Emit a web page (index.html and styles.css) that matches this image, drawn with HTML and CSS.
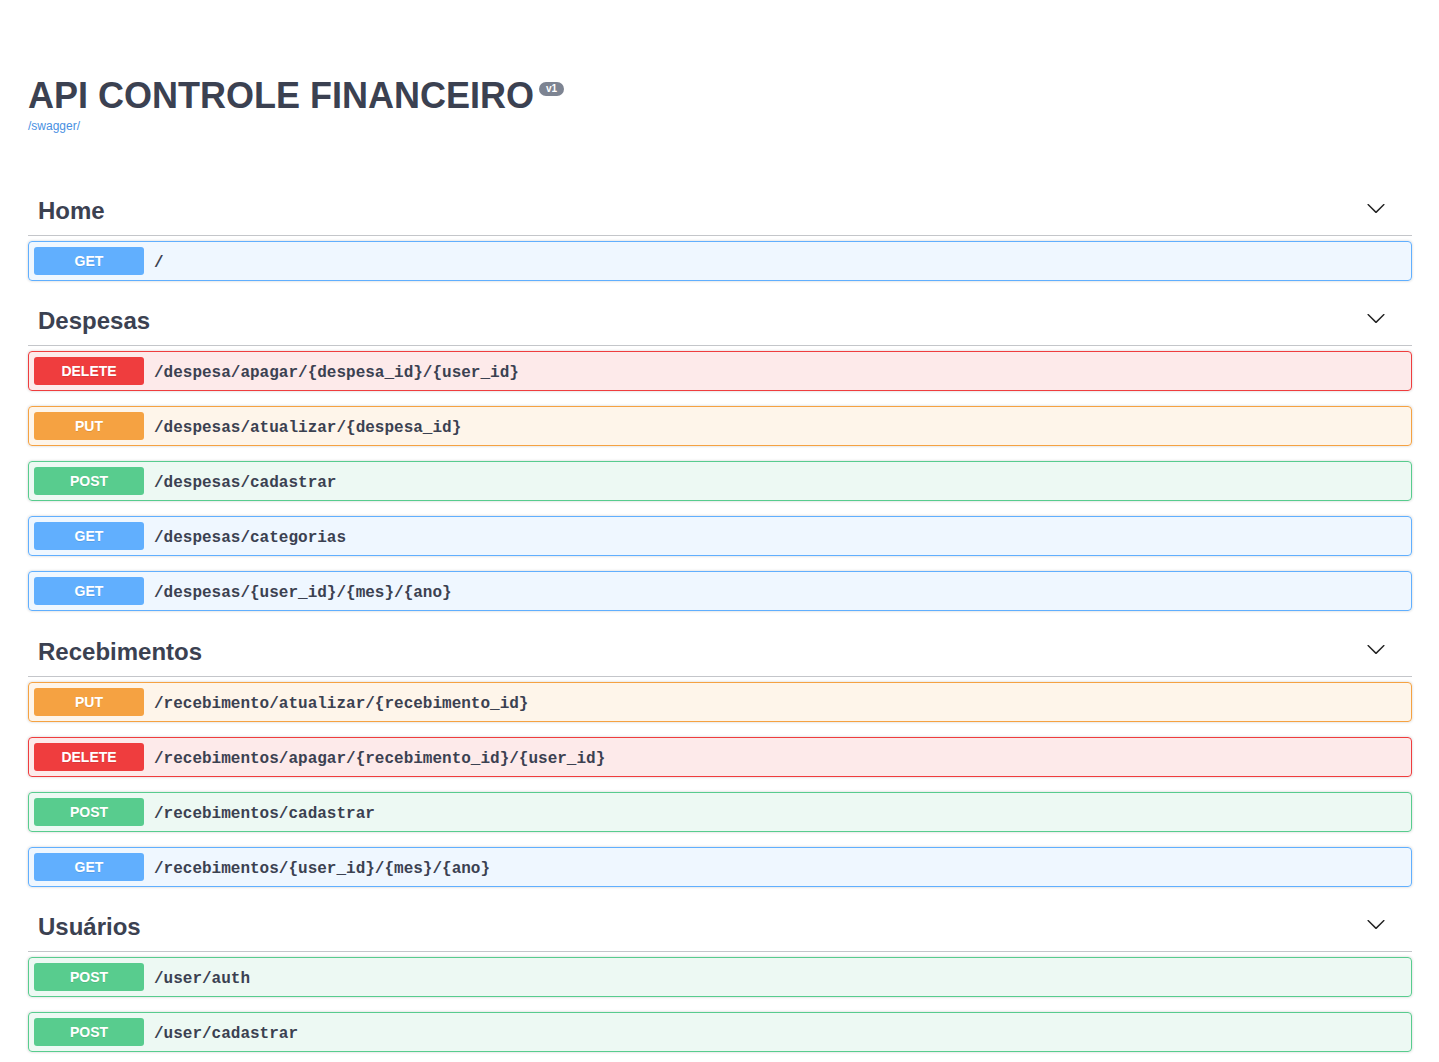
FILE: index.html
```html
<!DOCTYPE html>
<html lang="pt">
<head>
<meta charset="utf-8">
<title>API CONTROLE FINANCEIRO</title>
<link rel="stylesheet" href="styles.css">
</head>
<body>
<div class="wrapper">
  <div class="info">
    <h2 class="title">API CONTROLE FINANCEIRO<span class="version">v1</span></h2>
    <a class="url" href="#">/swagger/</a>
  </div>

  <section class="tag-section">
    <h3 class="tag"><span class="tag-name">Home</span><svg class="chev" viewBox="0 0 20 20" width="20" height="20"><path d="M17.418 6.109c.272-.268.709-.268.979 0s.271.701 0 .969l-7.908 7.83c-.27.268-.707.268-.979 0l-7.908-7.83c-.27-.268-.27-.701 0-.969.271-.268.709-.268.979 0L10 13.25l7.418-7.141z"/></svg></h3>
    <div class="op get"><span class="method">GET</span><span class="path">/</span></div>
  </section>

  <section class="tag-section">
    <h3 class="tag"><span class="tag-name">Despesas</span><svg class="chev" viewBox="0 0 20 20" width="20" height="20"><path d="M17.418 6.109c.272-.268.709-.268.979 0s.271.701 0 .969l-7.908 7.83c-.27.268-.707.268-.979 0l-7.908-7.83c-.27-.268-.27-.701 0-.969.271-.268.709-.268.979 0L10 13.25l7.418-7.141z"/></svg></h3>
    <div class="op delete"><span class="method">DELETE</span><span class="path">/despesa/apagar/{despesa_id}/{user_id}</span></div>
    <div class="op put"><span class="method">PUT</span><span class="path">/despesas/atualizar/{despesa_id}</span></div>
    <div class="op post"><span class="method">POST</span><span class="path">/despesas/cadastrar</span></div>
    <div class="op get"><span class="method">GET</span><span class="path">/despesas/categorias</span></div>
    <div class="op get"><span class="method">GET</span><span class="path">/despesas/{user_id}/{mes}/{ano}</span></div>
  </section>

  <section class="tag-section tag-section-shift">
    <h3 class="tag"><span class="tag-name">Recebimentos</span><svg class="chev" viewBox="0 0 20 20" width="20" height="20"><path d="M17.418 6.109c.272-.268.709-.268.979 0s.271.701 0 .969l-7.908 7.83c-.27.268-.707.268-.979 0l-7.908-7.83c-.27-.268-.27-.701 0-.969.271-.268.709-.268.979 0L10 13.25l7.418-7.141z"/></svg></h3>
    <div class="op put"><span class="method">PUT</span><span class="path">/recebimento/atualizar/{recebimento_id}</span></div>
    <div class="op delete"><span class="method">DELETE</span><span class="path">/recebimentos/apagar/{recebimento_id}/{user_id}</span></div>
    <div class="op post"><span class="method">POST</span><span class="path">/recebimentos/cadastrar</span></div>
    <div class="op get"><span class="method">GET</span><span class="path">/recebimentos/{user_id}/{mes}/{ano}</span></div>
  </section>

  <section class="tag-section">
    <h3 class="tag"><span class="tag-name">Usuários</span><svg class="chev" viewBox="0 0 20 20" width="20" height="20"><path d="M17.418 6.109c.272-.268.709-.268.979 0s.271.701 0 .969l-7.908 7.83c-.27.268-.707.268-.979 0l-7.908-7.83c-.27-.268-.27-.701 0-.969.271-.268.709-.268.979 0L10 13.25l7.418-7.141z"/></svg></h3>
    <div class="op post"><span class="method">POST</span><span class="path">/user/auth</span></div>
    <div class="op post"><span class="method">POST</span><span class="path">/user/cadastrar</span></div>
  </section>
</div>
</body>
</html>
```

FILE: styles.css
```css
* { box-sizing: border-box; }
html, body { margin: 0; padding: 0; background: #fff; }
body {
  font-family: "Liberation Sans", Arial, sans-serif;
  color: #3b4151;
}
.wrapper {
  padding: 0 27px 40px 28px;
}
.info {
  padding-top: 75px;
  margin-bottom: 53px;
}
.title {
  margin: 0;
  font-size: 36px;
  line-height: 42px;
  font-weight: 700;
  color: #3b4151;
}
.version {
  display: inline-block;
  vertical-align: super;
  position: relative;
  top: -3px;
  margin-left: 5px;
  padding: 2px 7px;
  border-radius: 57px;
  background: #7d8492;
  color: #fff;
  font-size: 10px;
  line-height: 10px;
  font-weight: 700;
}
.url {
  display: block;
  margin-top: 2px;
  font-size: 12px;
  line-height: 14px;
  color: #4990e2;
  text-decoration: none;
}
.tag-section {
  display: flex;
  flex-direction: column;
}
.tag-section-shift { padding-top: 1px; }
.tag {
  display: flex;
  align-items: center;
  margin: 0 0 5px;
  height: 50px;
  padding: 10px 26px 10px 10px;
  border-bottom: 1px solid rgba(59, 65, 81, 0.3);
  font-size: 24px;
  font-weight: 700;
  color: #3b4151;
}
.tag-name { flex: 1; }
.chev { display: block; fill: #222; margin-top: -6px; }
.op {
  display: flex;
  align-items: center;
  height: 40px;
  margin: 0 0 15px;
  padding: 5px;
  border: 1px solid;
  border-radius: 4px;
  box-shadow: 0 0 3px rgba(0, 0, 0, 0.19);
}
.method {
  flex: none;
  width: 110px;
  height: 28px;
  line-height: 28px;
  border-radius: 3px;
  text-align: center;
  color: #fff;
  font-size: 14px;
  font-weight: 700;
  text-shadow: 0 1px 0 rgba(0, 0, 0, 0.1);
}
.path {
  padding: 3px 10px 0;
  font-family: "Liberation Mono", "Courier New", monospace;
  font-size: 16px;
  font-weight: 700;
  color: #3b4151;
}
.get { border-color: #61affe; background: rgba(97, 175, 254, 0.1); }
.get .method { background: #61affe; }
.delete { border-color: #ef3d3e; background: rgba(239, 61, 62, 0.11); }
.delete .method { background: #ef3d3e; }
.put { border-color: #f5a242; background: rgba(245, 162, 66, 0.11); }
.put .method { background: #f5a242; }
.post { border-color: #58cc8e; background: rgba(88, 204, 142, 0.11); }
.post .method { background: #58cc8e; }
```
